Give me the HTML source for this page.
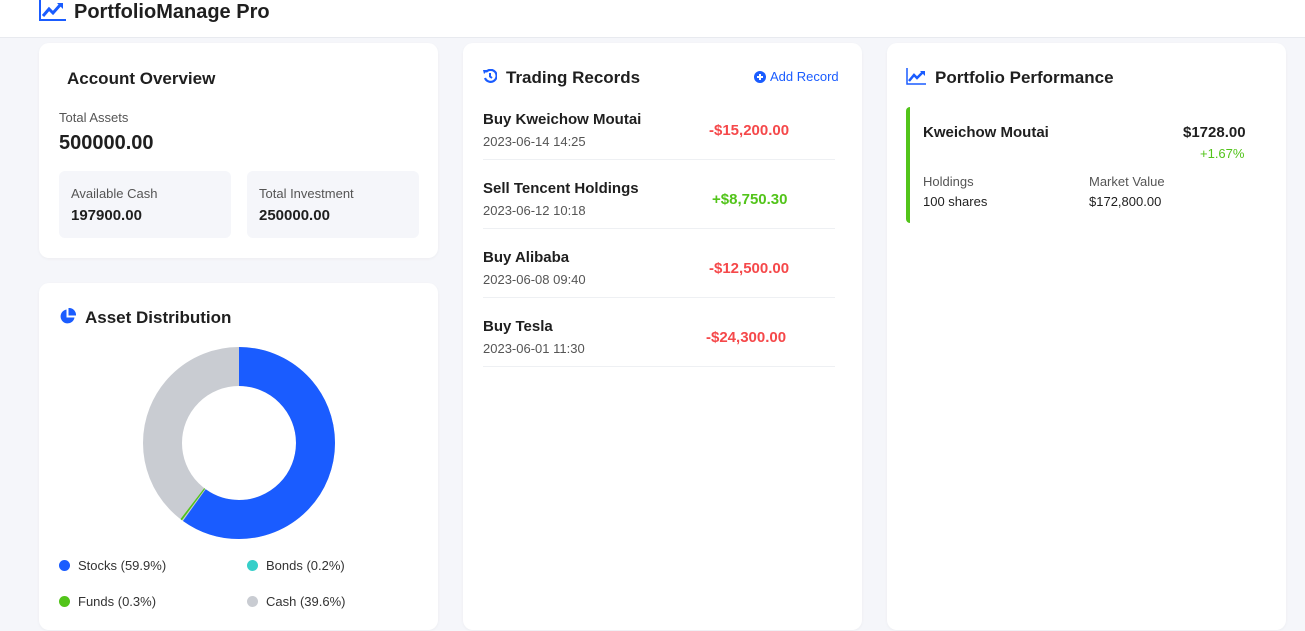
<!DOCTYPE html>
<html><head><meta charset="utf-8"><style>
*{margin:0;padding:0;box-sizing:border-box}
body{width:1305px;height:631px;overflow:hidden;background:#f5f6fa;font-family:"Liberation Sans",sans-serif;color:#1f1f1f;position:relative}
.hdr{position:absolute;left:0;top:0;width:1305px;height:38px;background:#fff;border-bottom:1px solid #e8eaef}
.card{position:absolute;background:#fff;border-radius:10px;box-shadow:0 1px 3px rgba(0,0,0,.04)}
.a{position:absolute;white-space:nowrap}
.h{font-size:17px;font-weight:bold;color:#1f1f1f}
.lbl{font-size:13px;color:#555}
.box{position:absolute;background:#f5f6fa;border-radius:6px}
.rt{font-size:15px;font-weight:bold}
.rd{font-size:13px;color:#555}
.red{color:#f5484a;font-weight:bold;font-size:15px}
.grn{color:#52c41a;font-weight:bold;font-size:15px}
.line{position:absolute;left:20px;width:352px;height:1px;background:#eef0f3}
.dot{position:absolute;width:11px;height:11px;border-radius:50%}
</style></head><body>
<div class="hdr">
<svg class="a" style="left:39px;top:0" width="27" height="21" viewBox="0 0 27 21"><path d="M1 0V20H27" stroke="#1a5cff" stroke-width="2" fill="none"/><path d="M4 16L10 9L14 13L22 4" stroke="#1a5cff" stroke-width="3" fill="none"/><path d="M18 3H24V9Z" fill="#1a5cff"/></svg>
<div class="a" style="left:74px;top:1px;font-size:20px;font-weight:bold">PortfolioManage Pro</div>
</div>

<div class="card" style="left:39px;top:43px;width:399px;height:215px">
<div class="a h" style="left:28px;top:26px">Account Overview</div>
<div class="a lbl" style="left:20px;top:67px">Total Assets</div>
<div class="a" style="left:20px;top:89px;font-size:20px;font-weight:bold">500000.00</div>
<div class="box" style="left:20px;top:128px;width:172px;height:67px"><div class="a lbl" style="left:12px;top:15px">Available Cash</div><div class="a" style="left:12px;top:36px;font-size:15px;font-weight:bold">197900.00</div></div>
<div class="box" style="left:208px;top:128px;width:172px;height:67px"><div class="a lbl" style="left:12px;top:15px">Total Investment</div><div class="a" style="left:12px;top:36px;font-size:15px;font-weight:bold">250000.00</div></div>
</div>

<div class="card" style="left:39px;top:283px;width:399px;height:347px">
<svg class="a" style="left:20px;top:25px" width="17" height="17" viewBox="0 0 17 17"><path d="M7.5 1.5A7 7 0 1 0 15.5 9.5H7.5Z" fill="#1a5cff"/><path d="M9.5 0A7 7 0 0 1 17 7.5H9.5Z" fill="#1a5cff"/></svg>
<div class="a h" style="left:46px;top:25px">Asset Distribution</div>
<svg class="a" style="left:104px;top:64px" width="192" height="192" viewBox="0 0 192 192">
<g transform="rotate(-90 96 96)" fill="none" stroke-width="39">
<circle cx="96" cy="96" r="76.5" stroke="#c9ccd2"/>
<circle cx="96" cy="96" r="76.5" stroke="#1a5cff" stroke-dasharray="287.9 1000"/>
<circle cx="96" cy="96" r="76.5" stroke="#52c41a" stroke-dasharray="0 288.9 1.5 1000"/>
</g></svg>
<div class="dot" style="left:20px;top:277px;background:#1a5cff"></div><div class="a lbl" style="left:39px;top:275px;color:#333">Stocks (59.9%)</div>
<div class="dot" style="left:208px;top:277px;background:#36cfc9"></div><div class="a lbl" style="left:227px;top:275px;color:#333">Bonds (0.2%)</div>
<div class="dot" style="left:20px;top:313px;background:#52c41a"></div><div class="a lbl" style="left:39px;top:311px;color:#333">Funds (0.3%)</div>
<div class="dot" style="left:208px;top:313px;background:#c9ccd2"></div><div class="a lbl" style="left:227px;top:311px;color:#333">Cash (39.6%)</div>
</div>

<div class="card" style="left:463px;top:43px;width:399px;height:587px">
<svg class="a" style="left:20px;top:26px" width="14" height="14" viewBox="0 0 14 14"><path d="M3 3A6 6 0 1 1 2 9" stroke="#1a5cff" stroke-width="2.2" fill="none"/><path d="M0 1L5 1L1 5Z" fill="#1a5cff"/><path d="M7 4V7.5L9 9" stroke="#1a5cff" stroke-width="2" fill="none"/></svg>
<div class="a h" style="left:43px;top:25px">Trading Records</div>
<svg class="a" style="left:291px;top:28px" width="12" height="12" viewBox="0 0 12 12"><circle cx="6" cy="6" r="6" fill="#1a5cff"/><path d="M6 3V9M3 6H9" stroke="#fff" stroke-width="2"/></svg>
<div class="a" style="left:307px;top:26px;font-size:13px;color:#1a5cff">Add Record</div>
<div class="a rt" style="left:20px;top:68px">Buy Kweichow Moutai</div><div class="a rd" style="left:20px;top:91px">2023-06-14 14:25</div><div class="a red" style="left:246px;top:79px">-$15,200.00</div><div class="line" style="top:116px"></div>
<div class="a rt" style="left:20px;top:137px">Sell Tencent Holdings</div><div class="a rd" style="left:20px;top:160px">2023-06-12 10:18</div><div class="a grn" style="left:249px;top:148px">+$8,750.30</div><div class="line" style="top:185px"></div>
<div class="a rt" style="left:20px;top:206px">Buy Alibaba</div><div class="a rd" style="left:20px;top:229px">2023-06-08 09:40</div><div class="a red" style="left:246px;top:217px">-$12,500.00</div><div class="line" style="top:254px"></div>
<div class="a rt" style="left:20px;top:275px">Buy Tesla</div><div class="a rd" style="left:20px;top:298px">2023-06-01 11:30</div><div class="a red" style="left:243px;top:286px">-$24,300.00</div><div class="line" style="top:323px"></div>
</div>

<div class="card" style="left:887px;top:43px;width:399px;height:587px">
<svg class="a" style="left:19px;top:25px" width="20" height="17" viewBox="0 0 20 17"><path d="M1 0V16H20" stroke="#1a5cff" stroke-width="1.5" fill="none"/><path d="M3 13L8 7L11 10L17 4" stroke="#1a5cff" stroke-width="2.5" fill="none"/><path d="M14 3H19V8Z" fill="#1a5cff"/></svg>
<div class="a h" style="left:48px;top:25px">Portfolio Performance</div>
<div class="a" style="left:19px;top:64px;width:4px;height:116px;background:#52c41a;border-radius:4px 0 0 4px"></div>
<div class="a" style="left:36px;top:81px;font-size:15px;font-weight:bold">Kweichow Moutai</div>
<div class="a" style="left:296px;top:81px;font-size:15px;font-weight:bold">$1728.00</div>
<div class="a" style="left:313px;top:103px;font-size:13px;color:#52c41a">+1.67%</div>
<div class="a lbl" style="left:36px;top:131px">Holdings</div><div class="a" style="left:36px;top:151px;font-size:13px">100 shares</div>
<div class="a lbl" style="left:202px;top:131px">Market Value</div><div class="a" style="left:202px;top:151px;font-size:13px">$172,800.00</div>
</div>
</body></html>
